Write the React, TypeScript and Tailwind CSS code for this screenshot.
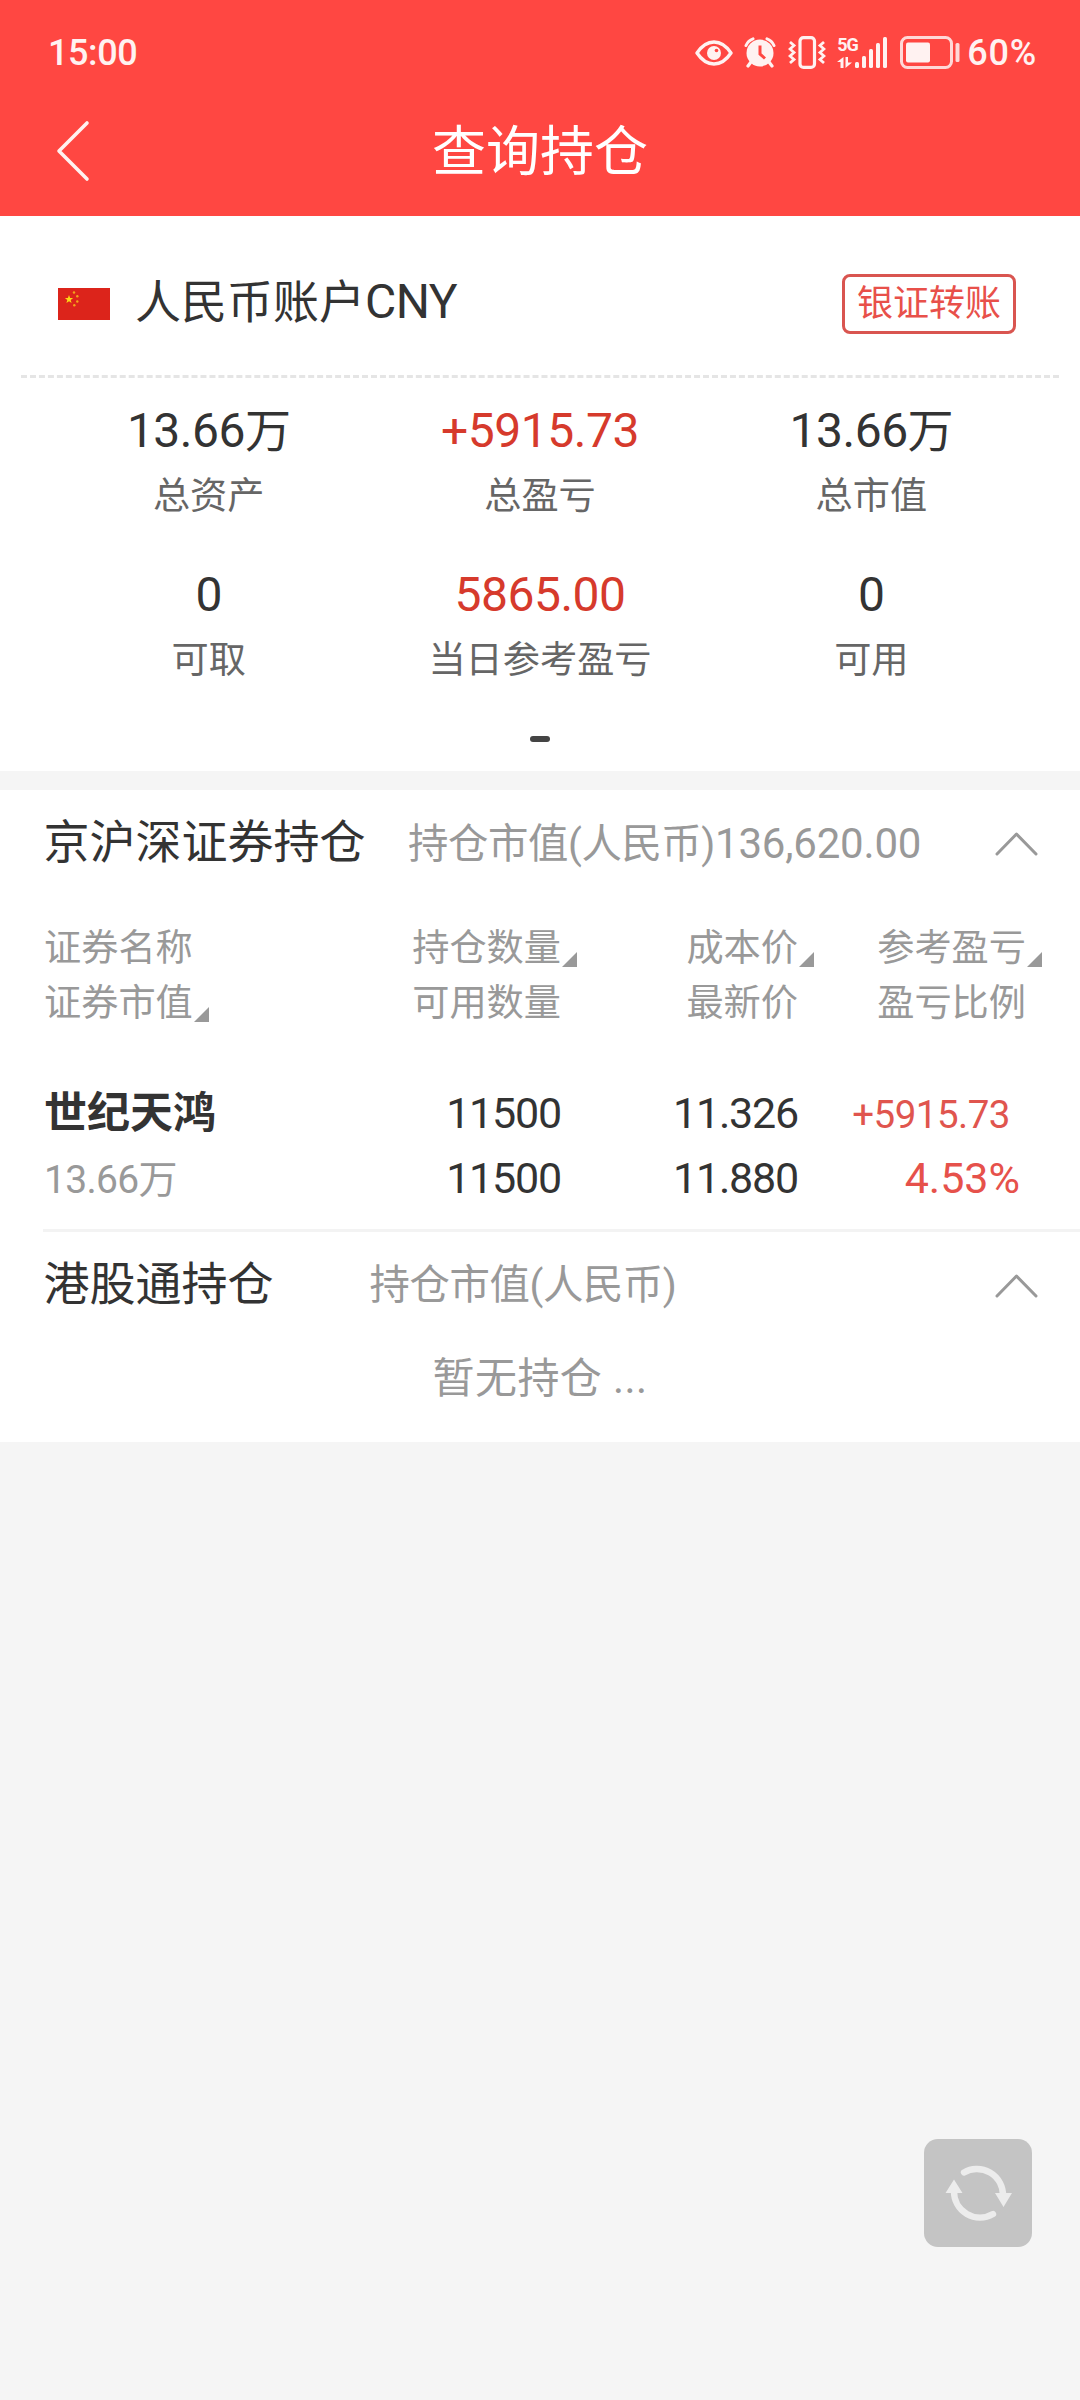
import type { ReactNode } from "react";

interface Stat {
  value: string;
  unit?: string;
  label: string;
  highlight?: boolean;
}

const stats: Stat[] = [
  { value: "13.66", unit: "万", label: "总资产" },
  { value: "+5915.73", label: "总盈亏", highlight: true },
  { value: "13.66", unit: "万", label: "总市值" },
  { value: "0", label: "可取" },
  { value: "5865.00", label: "当日参考盈亏", highlight: true },
  { value: "0", label: "可用" },
];

const signalBars = ["h-[6px]", "h-[12px]", "h-[19px]", "h-[25px]", "h-[31px]"];

function EyeIcon() {
  return (
    <svg width="38" height="26" viewBox="0 0 38 26" fill="none">
      <path d="M2 13C7 5.500 12.500 2 19 2s12 3.500 17 11c-5 7.500-10.500 11-17 11S7 20.500 2 13z" stroke="#fff2f1" strokeWidth="3.400" strokeLinejoin="round" />
      <circle cx="19" cy="13" r="7" fill="#fff2f1" />
      <circle cx="21.500" cy="10.500" r="1.800" fill="#ff4742" />
    </svg>
  );
}

function AlarmIcon() {
  return (
    <svg width="32" height="31" viewBox="0 0 32 31" fill="none">
      <circle cx="16" cy="16" r="13.500" fill="#fff2f1" />
      <path d="M2 8.500C3.500 5 6 2.800 9 1.800M30 8.500C28.500 5 26 2.800 23 1.800" stroke="#fff2f1" strokeWidth="3" strokeLinecap="round" />
      <path d="M7 25l-3 4M25 25l3 4" stroke="#fff2f1" strokeWidth="3.200" strokeLinecap="round" />
      <path d="M16 8.500V17l5 4.500" stroke="#ff4742" strokeWidth="3" />
    </svg>
  );
}

function VibrateIcon() {
  return (
    <svg width="38" height="33" viewBox="0 0 38 33" fill="none" stroke="#fff2f1">
      <rect x="12" y="1.600" width="14.500" height="29.800" rx="3.500" strokeWidth="3.200" />
      <path d="M2 6l4 3.500-4 3.500 4 3.500L2 20l4 3.500L2 27" strokeWidth="2.800" />
      <path d="M36 6l-4 3.500 4 3.500-4 3.500 4 3.500-4 3.500 4 3.500" strokeWidth="2.800" />
    </svg>
  );
}

function StatusBar() {
  return (
    <div className="flex h-[105px] items-center pl-[48px] text-[36px] font-medium leading-[36px] text-[#fff2f1]">
      <span className="tracking-[-0.4px]">15:00</span>
      <div className="ml-auto mr-[43px] flex items-center">
        <EyeIcon />
        <div className="ml-[11px]"><AlarmIcon /></div>
        <div className="ml-3"><VibrateIcon /></div>
        <div className="ml-[11px] flex h-[31px] w-[51px] items-end gap-[3px]">
          <div className="flex h-full w-[15px] shrink-0 flex-col justify-between">
            <span className="text-[18px] font-bold leading-[15px] tracking-[-1px]">5G</span>
            <svg width="15" height="11" viewBox="0 0 15 11" fill="#fff2f1">
              <path d="M6.500 0v11H3.500V5H0zM8.500 0h2.500v5.500h4L8.500 11z" />
            </svg>
          </div>
          {signalBars.map((height) => (
            <div key={height} className={`w-1 shrink-0 rounded-[1.500px] bg-[#fff2f1] ${height}`} />
          ))}
        </div>
        <svg className="ml-3" width="60" height="33" viewBox="0 0 60 33" fill="none">
          <rect x="1.500" y="1.500" width="50" height="30" rx="6" stroke="#fff2f1" strokeOpacity=".85" strokeWidth="3" />
          <rect x="6" y="6.500" width="24" height="20" rx="2" fill="#fff2f1" />
          <rect x="55.500" y="7" width="4" height="19" rx="1.500" fill="#fff2f1" fillOpacity=".85" />
        </svg>
        <span className="ml-[7px] tracking-[0.8px]">60%</span>
      </div>
    </div>
  );
}

function TitleBar() {
  return (
    <div className="grid h-[111px] grid-cols-3 items-start text-white">
      <svg className="ml-14 mt-[15px]" width="34" height="62" viewBox="0 0 34 62" fill="none">
        <path d="M31 3L3 31l28 28" stroke="#fff2f1" strokeWidth="3.600" strokeLinecap="round" strokeLinejoin="round" />
      </svg>
      <h1 className="text-center text-[54px] leading-[96px]">查询持仓</h1>
    </div>
  );
}

function Flag() {
  return (
    <svg width="52" height="32" viewBox="0 0 52 32">
      <rect width="52" height="32" fill="#dc241b" />
      <path d="M11 7l1.100 2.900 3 .1-2.400 1.900.9 3L11 13.200l-2.600 1.700.9-3L6.900 10l3-.1z" fill="#fcd716" />
      <g fill="#f3a51b">
        <circle cx="16" cy="4.500" r="1.200" />
        <circle cx="19.300" cy="8.300" r="1.200" />
        <circle cx="19.300" cy="13.500" r="1.200" />
        <circle cx="16.300" cy="17.300" r="1.200" />
      </g>
    </svg>
  );
}

function AccountCard() {
  return (
    <section className="h-[555px] bg-white">
      <div className="flex h-[159px] items-start pl-[58px] pr-16">
        <div className="mt-[72px]"><Flag /></div>
        <h2 className="ml-[25px] mt-[56px] text-[46px] leading-[60px] text-[#333]">
          人民币账户<span className="text-[48px] tracking-[-0.5px]">CNY</span>
        </h2>
        <button className="ml-auto mt-[58px] h-[60px] w-[174px] rounded-lg border-[3px] border-[#d95550] text-[36px] leading-[54px] text-[#e8504a]">
          银证转账
        </button>
      </div>
      <div className="mx-[21px] border-t-[3px] border-dashed border-[#e5e5e5]" />
      <div className="mx-[43px] grid grid-cols-3 pt-[23px] text-center">
        {stats.map((stat) => (
          <div key={stat.label} className="h-[164px]">
            <div className={`text-[48px] leading-[60px] tracking-[-0.5px] ${stat.highlight ? "text-[#d63a2c]" : "text-[#333]"}`}>
              {stat.value}
              {stat.unit && <span className="text-[46px]">{stat.unit}</span>}
            </div>
            <div className="mt-2 text-[37.200px] leading-[55px] text-[#666]">{stat.label}</div>
          </div>
        ))}
      </div>
      <div className="mx-auto mt-[7px] h-[6px] w-5 rounded-[3px] bg-[#444]" />
    </section>
  );
}

function Chevron() {
  return (
    <svg className="ml-auto mr-[42px] mt-[41px]" width="43" height="25" viewBox="0 0 43 25" fill="none">
      <path d="M2 23L21.500 3 41 23" stroke="#999" strokeWidth="3" strokeLinecap="round" strokeLinejoin="round" />
    </svg>
  );
}

function SectionHeader({ title, children, gap }: { title: string; children: ReactNode; gap: string }) {
  return (
    <div className="flex h-[108px] items-start pl-[43.500px]">
      <h2 className="text-[46px] leading-[105px] text-[#333]">{title}</h2>
      <div className={`text-[40.400px] leading-[108px] tracking-[-0.4px] text-[#999] ${gap}`}>{children}</div>
      <Chevron />
    </div>
  );
}

function Sortable({ children }: { children: ReactNode }) {
  return (
    <span className="relative">
      {children}
      <svg className="absolute bottom-[3px] left-full ml-px" width="15" height="15" viewBox="0 0 15 15">
        <path d="M15 0v15H0z" fill="#999" />
      </svg>
    </span>
  );
}

function TableHead() {
  return (
    <div className="mt-[23px] grid grid-cols-[250px_267px_237px_228px] pl-11 text-[37.200px] leading-[55px] text-[#999]">
      <div>
        <div>证券名称</div>
        <div><Sortable>证券市值</Sortable></div>
      </div>
      <div className="text-right">
        <div><Sortable>持仓数量</Sortable></div>
        <div>可用数量</div>
      </div>
      <div className="text-right">
        <div><Sortable>成本价</Sortable></div>
        <div>最新价</div>
      </div>
      <div className="text-right">
        <div><Sortable>参考盈亏</Sortable></div>
        <div>盈亏比例</div>
      </div>
    </div>
  );
}

function HoldingRow() {
  return (
    <div className="pl-11 pt-[50px] text-[43px] leading-[65px] text-[#333]">
      <div className="grid h-[65px] grid-cols-[250px_267px_237px_auto] items-baseline">
        <span className="font-bold">世纪天鸿</span>
        <span className="text-right tracking-[-1.2px]">11500</span>
        <span className="text-right tracking-[-1.2px]">11.326</span>
        <span className="pr-[70px] text-right text-[38.500px] tracking-[-0.5px] text-[#e0554e]">+5915.73</span>
      </div>
      <div className="grid h-[65px] grid-cols-[250px_267px_237px_auto] items-baseline">
        <span className="text-[39px] tracking-[-0.7px] text-[#999]">13.66万</span>
        <span className="text-right tracking-[-1.2px]">11500</span>
        <span className="text-right tracking-[-1.2px]">11.880</span>
        <span className="pr-[60px] text-right text-[#e6514b]">4.53%</span>
      </div>
      <div className="-ml-px mt-[18px] h-[3px] bg-[#f3f3f3]" />
    </div>
  );
}

function RefreshButton() {
  return (
    <button className="fixed right-12 top-[2139px] h-[108px] w-[108px] rounded-[14px] bg-[#c4c4c4]">
      <svg width="108" height="108" viewBox="0 0 108 108" fill="none">
        <path d="M40 33.500A26 26 0 0 1 79 56" stroke="#ececec" strokeWidth="6.400" strokeLinecap="round" />
        <path d="M69 75A26 26 0 0 1 30 52" stroke="#ececec" strokeWidth="6.400" strokeLinecap="round" />
        <path d="M71 54h17l-8.500 14zM21.500 54h17L30 40.500z" fill="#ececec" />
      </svg>
    </button>
  );
}

export default function App() {
  return (
    <div className="min-h-[2400px] w-[1080px] bg-[#f5f5f5] font-['Roboto','Noto_Sans_CJK_SC',sans-serif]">
      <header className="bg-[#ff4742]">
        <StatusBar />
        <TitleBar />
      </header>
      <AccountCard />
      <main className="mt-[19px] h-[652px] bg-white">
        <SectionHeader title="京沪深证券持仓" gap="ml-[42.500px]">
          持仓市值(人民币)<span className="text-[42px] tracking-[-0.2px]">136,620.00</span>
        </SectionHeader>
        <TableHead />
        <HoldingRow />
        <SectionHeader title="港股通持仓" gap="ml-[96px]">持仓市值(人民币)</SectionHeader>
        <div className="mt-[12px] text-center text-[42px] leading-[54px] tracking-[0.4px] text-[#999]">暂无持仓 ...</div>
      </main>
      <RefreshButton />
    </div>
  );
}
